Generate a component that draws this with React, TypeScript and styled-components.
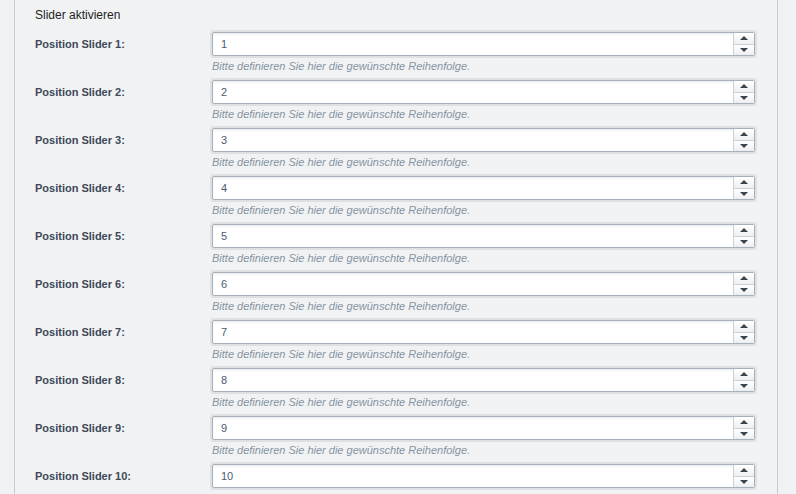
import styled, { createGlobalStyle } from "styled-components";

const GlobalStyle = createGlobalStyle`
  html, body {
    margin: 0;
    padding: 0;
    background: #f1f2f4;
    font-family: "Liberation Sans", Arial, sans-serif;
  }
`;

const Page = styled.div`
  margin-left: 14px;
  width: 764px;
  min-height: 494px;
  border-left: 1px solid #c9cdd3;
  border-right: 1px solid #c9cdd3;
  padding: 7px 0 0 20px;
  box-sizing: border-box;
`;

const Title = styled.div`
  font-size: 12px;
  line-height: 16px;
  color: #1d1f22;
  margin-bottom: 7px;
`;

const Row = styled.div`
  display: grid;
  grid-template-columns: 175px 547px;
  margin-bottom: 4px;
`;

const Label = styled.label`
  font-size: 11px;
  font-weight: bold;
  color: #3e4955;
  line-height: 28px;
`;

const Field = styled.div`
  display: flex;
  flex-direction: column;
`;

const Ring = styled.div`
  display: flex;
  border: 2px solid #dde0e4;
  border-radius: 4px;
  height: 28px;
  box-sizing: border-box;
`;

const Box = styled.div`
  flex: 1;
  display: flex;
  border: 1px solid #a7afb8;
  border-radius: 2px;
  background: #fff;
  box-shadow: inset 0 2px 2px rgba(0, 0, 0, 0.06);
`;

const Value = styled.input`
  flex: 1;
  border: 0;
  outline: 0;
  background: transparent;
  padding: 0 0 0 8px;
  font-family: "Liberation Sans", Arial, sans-serif;
  font-size: 11px;
  color: #4a5c6e;
`;

const Spinner = styled.div`
  width: 20px;
  display: flex;
  flex-direction: column;
  border-left: 1px solid #cbd0d6;
`;

const SpinButton = styled.div<{ $down?: boolean }>`
  flex: 1;
  display: flex;
  align-items: center;
  justify-content: center;
  background: linear-gradient(#ffffff, #eef0f2);
  border-top: ${(p) => (p.$down ? "1px solid #cbd0d6" : "0")};

  &::after {
    content: "";
    width: 0;
    height: 0;
    border-left: 4px solid transparent;
    border-right: 4px solid transparent;
    ${(p) =>
      p.$down
        ? "border-top: 4px solid #3b4550;"
        : "border-bottom: 4px solid #3b4550;"}
  }
`;

const Help = styled.div`
  font-size: 11px;
  font-style: italic;
  color: #8794a2;
  line-height: 16px;
  padding-left: 2px;
`;

const positions = [1, 2, 3, 4, 5, 6, 7, 8, 9, 10];

export default function App() {
  return (
    <>
      <GlobalStyle />
      <Page>
        <Title>Slider aktivieren</Title>
        {positions.map((n) => (
          <Row key={n}>
            <Label>Position Slider {n}:</Label>
            <Field>
              <Ring>
                <Box>
                  <Value type="text" defaultValue={String(n)} />
                  <Spinner>
                    <SpinButton />
                    <SpinButton $down />
                  </Spinner>
                </Box>
              </Ring>
              <Help>Bitte definieren Sie hier die gewünschte Reihenfolge.</Help>
            </Field>
          </Row>
        ))}
      </Page>
    </>
  );
}
